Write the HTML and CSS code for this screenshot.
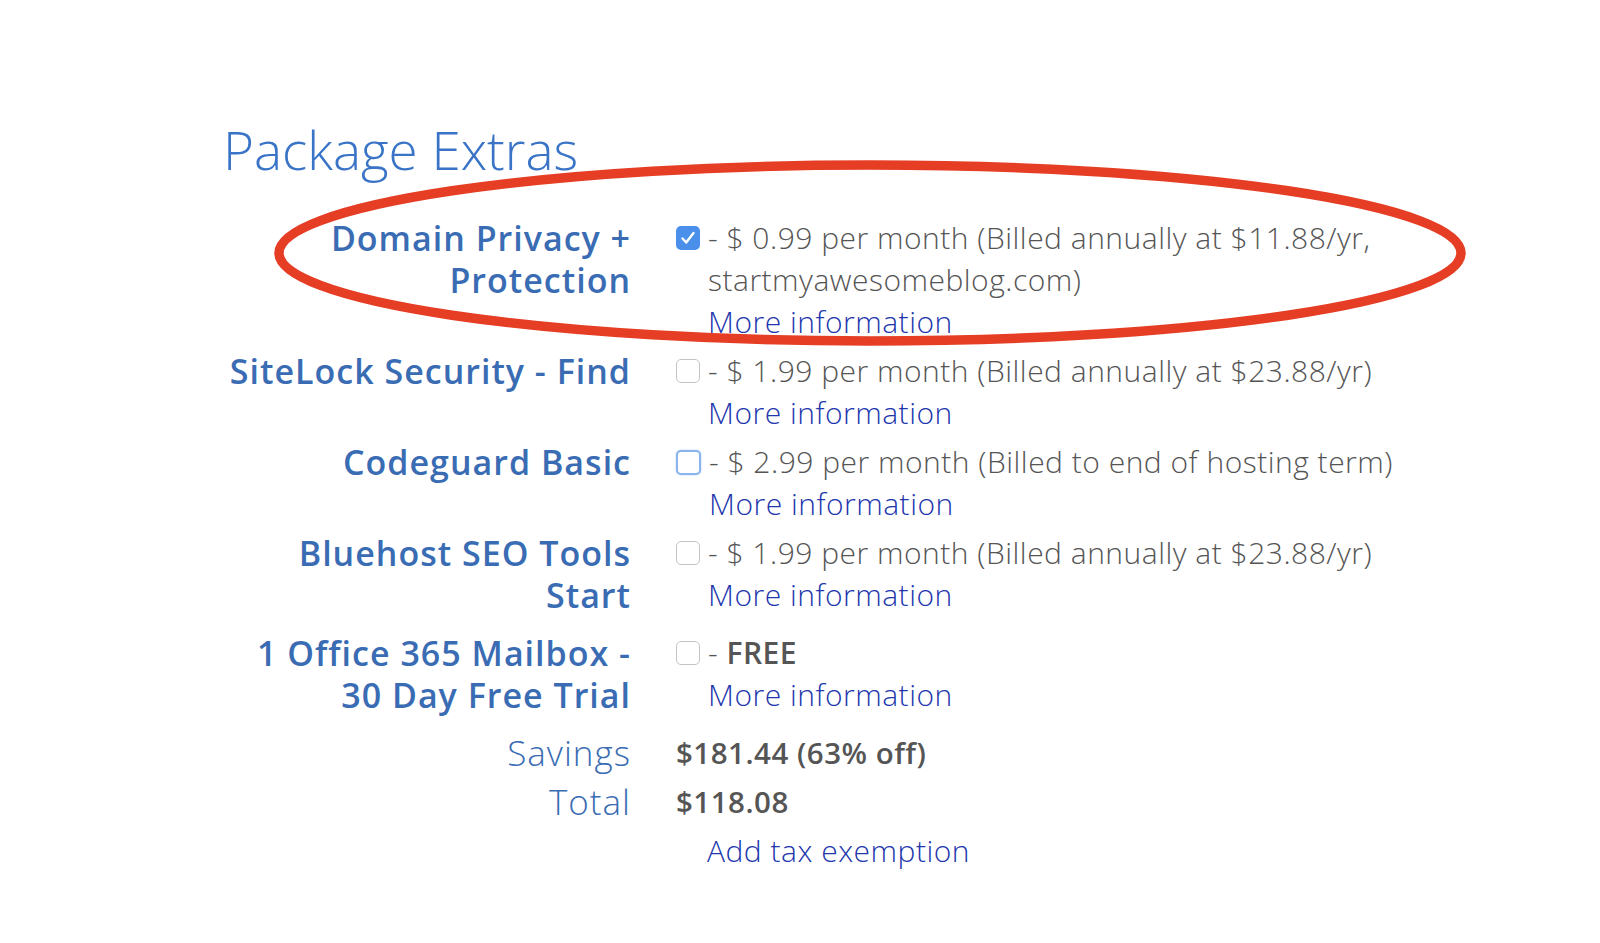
FILE: index.html
```html
<!DOCTYPE html>
<html lang="en">
<head>
<meta charset="utf-8">
<title>Package Extras</title>
<link rel="stylesheet" href="styles.css">
</head>
<body>
<main class="page">
  <h1 class="title">Package Extras</h1>
  <div class="rows">
    <div class="row">
      <div class="label">Domain Privacy +<br>Protection</div>
      <div class="value">
        <span class="cb checked"><svg viewBox="0 0 24 24" width="24" height="24"><path d="M6.5 12.5 L10.2 16.5 L17.5 7" fill="none" stroke="#fff" stroke-width="2.4" stroke-linecap="round" stroke-linejoin="round"/></svg></span>
        <div class="desc">- $ 0.99 per month (Billed annually at $11.88/yr,<br>startmyawesomeblog.com)<br><a class="link" href="#">More information</a></div>
      </div>
    </div>
    <div class="row">
      <div class="label">SiteLock Security - Find</div>
      <div class="value">
        <span class="cb"></span>
        <div class="desc">- $ 1.99 per month (Billed annually at $23.88/yr)<br><a class="link" href="#">More information</a></div>
      </div>
    </div>
    <div class="row">
      <div class="label">Codeguard Basic</div>
      <div class="value">
        <span class="cb focus"></span>
        <div class="desc">- $ 2.99 per month (Billed to end of hosting term)<br><a class="link" href="#">More information</a></div>
      </div>
    </div>
    <div class="row">
      <div class="label">Bluehost SEO Tools<br>Start</div>
      <div class="value">
        <span class="cb"></span>
        <div class="desc">- $ 1.99 per month (Billed annually at $23.88/yr)<br><a class="link" href="#">More information</a></div>
      </div>
    </div>
    <div class="row spaced">
      <div class="label">1 Office 365 Mailbox -<br>30 Day Free Trial</div>
      <div class="value">
        <span class="cb"></span>
        <div class="desc">- <b class="strong">FREE</b><br><a class="link" href="#">More information</a></div>
      </div>
    </div>
    <div class="row spaced">
      <div class="label light">Savings</div>
      <div class="value"><span class="amount">$181.44 (63% off)</span></div>
    </div>
    <div class="row">
      <div class="label light">Total</div>
      <div class="value"><span class="amount">$118.08</span></div>
    </div>
    <div class="row">
      <div class="label"></div>
      <div class="value"><a class="link indent" href="#">Add tax exemption</a></div>
    </div>
  </div>
  <svg class="circle" viewBox="0 0 1600 943" width="1600" height="943" aria-hidden="true">
    <ellipse cx="870" cy="253" rx="591" ry="88" fill="none" stroke="#e63d25" stroke-width="9.5"/>
  </svg>
</main>
</body>
</html>
```
FILE: styles.css
```css
html, body {
  margin: 0;
  padding: 0;
  background: #ffffff;
}

.page {
  position: relative;
  width: 1600px;
  height: 943px;
  box-sizing: border-box;
  padding: 120px 0 0 223px;
  font-family: "Open Sans", "Liberation Sans", sans-serif;
  overflow: hidden;
}

.title {
  margin: 0;
  font-weight: 300;
  font-size: 53px;
  line-height: 60px;
  color: #3a74c6;
}

.rows {
  margin-top: 37px;
  display: flex;
  flex-direction: column;
  gap: 7px;
}

.row {
  display: flex;
  align-items: flex-start;
}

.row.spaced {
  margin-top: 9px;
}

.label {
  width: 408px;
  flex: none;
  text-align: right;
  font-weight: 600;
  font-size: 34px;
  line-height: 42px;
  letter-spacing: 1px;
  color: #3a6cb4;
}

.label.light {
  font-weight: 300;
  font-size: 35px;
  letter-spacing: 1px;
}

.value {
  margin-left: 45px;
  display: flex;
  align-items: flex-start;
  gap: 8px;
}

.cb {
  flex: none;
  width: 22px;
  height: 22px;
  margin-top: 9px;
  border: 1px solid #c4c4c4;
  border-radius: 5px;
  background: #fff;
  box-sizing: content-box;
  display: flex;
}

.cb.checked {
  width: 24px;
  height: 24px;
  border: none;
  background: #4a8fea;
}

.cb.focus {
  border: 2px solid #8ab5ec;
  width: 21px;
  height: 21px;
  box-shadow: 0 0 2px #a9c9f2;
}

.desc {
  font-weight: 300;
  font-size: 30px;
  line-height: 42px;
  letter-spacing: 0.5px;
  color: #555555;
}

.strong {
  font-weight: 600;
}

.link {
  color: #2236ad;
  text-decoration: none;
  font-weight: 300;
  font-size: 30px;
  line-height: 42px;
  letter-spacing: 0.5px;
}

.amount {
  font-weight: 600;
  font-size: 29.5px;
  line-height: 42px;
  letter-spacing: 0.5px;
  color: #555555;
}

.indent {
  margin-left: 31px;
}

.circle {
  position: absolute;
  left: 0;
  top: 0;
  pointer-events: none;
}
```
